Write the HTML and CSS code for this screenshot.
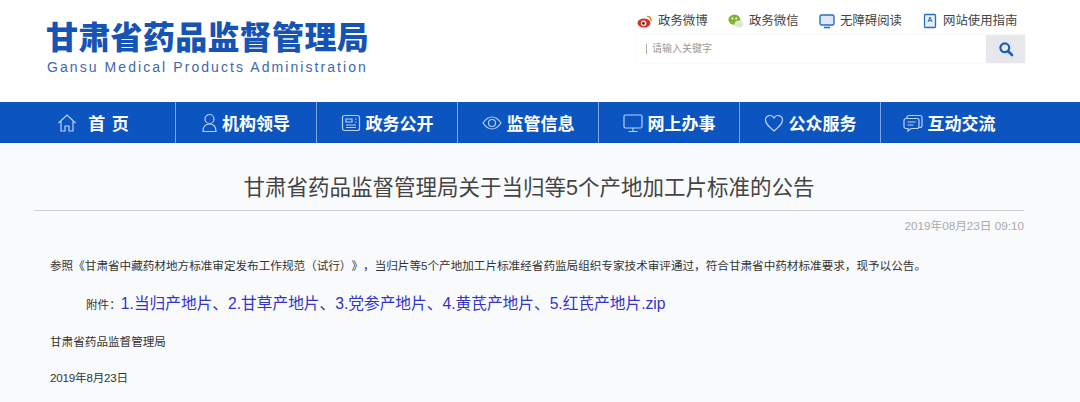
FILE: index.html
```html
<!DOCTYPE html>
<html lang="zh-CN">
<head>
<meta charset="utf-8">
<title>甘肃省药品监督管理局</title>
<link rel="stylesheet" href="styles.css">
</head>
<body>
<header class="header">
  <div class="logo">
    <div class="logo-cn">甘肃省药品监督管理局</div>
    <div class="logo-en">Gansu Medical Products Administration</div>
  </div>
  <div class="tools">
    <ul class="links">
      <li class="link link-weibo">
        <svg class="link-icon" viewBox="0 0 16 16"><ellipse cx="7" cy="10" rx="6.5" ry="4.6" fill="#d8332b"/><circle cx="6.6" cy="10.2" r="2.6" fill="#fff"/><circle cx="6.4" cy="10.4" r="1.3" fill="#222"/><path d="M10 3.5a3.6 3.6 0 0 1 4 4.5" fill="none" stroke="#ec8a2c" stroke-width="1.6"/></svg>
        政务微博</li>
      <li class="link link-wechat">
        <svg class="link-icon" viewBox="0 0 16 16"><ellipse cx="6.4" cy="6.6" rx="6" ry="5.2" fill="#7fb62e"/><circle cx="4.4" cy="5.4" r="1" fill="#fff"/><circle cx="8.2" cy="5.4" r="1" fill="#fff"/><ellipse cx="11" cy="11" rx="4.4" ry="3.6" fill="#dfe6d6"/></svg>
        政务微信</li>
      <li class="link link-access">
        <svg class="link-icon" viewBox="0 0 16 16"><rect x="1" y="2" width="14" height="10" rx="1.5" fill="#dce8f8" stroke="#2a6cc4" stroke-width="1.4"/><path d="M5 14.5h6" stroke="#2a6cc4" stroke-width="1.6"/></svg>
        无障碍阅读</li>
      <li class="link link-guide">
        <svg class="link-icon" viewBox="0 0 16 16"><rect x="2.5" y="1.5" width="11" height="13" rx="1" fill="#e6eefa" stroke="#2a6cc4" stroke-width="1.3"/><path d="M6 9l2-5 2 5M6.8 7.6h2.4" fill="none" stroke="#2a6cc4" stroke-width="1"/></svg>
        网站使用指南</li>
    </ul>
    <div class="search">
      <div class="search-input">请输入关键字</div>
      <div class="search-btn">
        <svg viewBox="0 0 16 16" width="16" height="16"><circle cx="6.8" cy="6.8" r="4.4" fill="none" stroke="#1d5fb8" stroke-width="2.2"/><path d="M10 10l4 4" stroke="#1d5fb8" stroke-width="2.6" stroke-linecap="round"/></svg>
      </div>
    </div>
  </div>
</header>
<nav class="nav">
  <div class="nav-inner">
    <a class="nav-item nav-home">
      <svg class="nav-icon" viewBox="0 0 20 20"><path d="M1.500 10 10 2l8.500 8M4 8.500V18h4v-5h4v5h4V8.500"/></svg>
      <span class="spaced">首 页</span></a>
    <a class="nav-item">
      <svg class="nav-icon nav-icon-narrow" viewBox="0 0 15 20"><circle cx="7.500" cy="6" r="4.500"/><path d="M1 18.500c0-5 2.500-7.500 6.500-7.500s6.500 2.500 6.500 7.500z"/></svg>
      机构领导</a>
    <a class="nav-item">
      <svg class="nav-icon" viewBox="0 0 20 20"><rect x="1.500" y="2.500" width="17" height="15" rx="2"/><path d="M5 6h6v3H5zM5 12h10M5 14.500h10M14 6h1.500M14 9h1.500"/></svg>
      政务公开</a>
    <a class="nav-item">
      <svg class="nav-icon" viewBox="0 0 20 20"><path d="M1 10c3-4.500 6-6 9-6s6 1.500 9 6c-3 4.500-6 6-9 6s-6-1.500-9-6z"/><circle cx="10" cy="10" r="3.500"/></svg>
      监管信息</a>
    <a class="nav-item">
      <svg class="nav-icon" viewBox="0 0 20 20"><rect x="1" y="2" width="18" height="13" rx="1.500"/><path d="M10 15v3.500M5.500 18.500h9"/></svg>
      网上办事</a>
    <a class="nav-item">
      <svg class="nav-icon" viewBox="0 0 20 20"><path d="M10 18C4 13 1.500 10.500 1.500 7A4.500 4.500 0 0 1 10 5a4.500 4.500 0 0 1 8.500 2c0 3.500-2.500 6-8.500 11z"/></svg>
      公众服务</a>
    <a class="nav-item nav-last">
      <svg class="nav-icon" viewBox="0 0 20 20"><path d="M4 5.500V4.500a2 2 0 0 1 2-2h11a2 2 0 0 1 2 2v8a2 2 0 0 1-2 2h-1"/><path d="M3 5.500h11a2 2 0 0 1 2 2v6a2 2 0 0 1-2 2H8l-3 2.500v-2.500H3a2 2 0 0 1-2-2v-6a2 2 0 0 1 2-2zM4.500 9h8M4.500 12h6"/></svg>
      互动交流</a>
  </div>
</nav>
<main class="article">
  <h1 class="title">甘肃省药品监督管理局关于当归等5个产地加工片标准的公告</h1>
  <div class="date">2019年08月23日 09:10</div>
  <p class="para para-intro">参照《甘肃省中藏药材地方标准审定发布工作规范（试行）》，当归片等5个产地加工片标准经省药监局组织专家技术审评通过，符合甘肃省中药材标准要求，现予以公告。</p>
  <p class="para para-attach">附件：<a class="attach-link">1.当归产地片、2.甘草产地片、3.党参产地片、4.黄芪产地片、5.红芪产地片.zip</a></p>
  <p class="para para-org">甘肃省药品监督管理局</p>
  <p class="para para-day">2019年8月23日</p>
</main>
</body>
</html>
```
FILE: styles.css
```css
* { box-sizing: border-box; }
html, body { margin: 0; padding: 0; }
body {
  width: 1080px;
  height: 402px;
  overflow: hidden;
  background: #f8fafc;
  font-family: "Liberation Sans", "Noto Sans CJK SC", sans-serif;
  color: #333;
  text-spacing-trim: space-all;
}
.header {
  height: 102px;
  background: #fff;
  display: flex;
  justify-content: space-between;
  padding: 0 55px 0 47px;
}
.logo { padding-top: 21px; }
.logo-cn {
  margin-left: -1px;
  font-size: 32px;
  line-height: 34px;
  font-weight: 900;
  color: #1553b4;
  letter-spacing: 0.3px;
  white-space: nowrap;
}
.logo-en {
  margin-top: 4px;
  font-size: 14px;
  line-height: 16px;
  color: #3e68ad;
  letter-spacing: 2.07px;
  white-space: nowrap;
}
.tools { width: 388px; padding-top: 12px; }
.links {
  list-style: none;
  margin: 0;
  padding: 0;
  display: flex;
  height: 18px;
  font-size: 12.4px;
  line-height: 18px;
  color: #444;
}
.link { display: flex; align-items: center; gap: 5px; white-space: nowrap; }
.link-weibo { width: 91px; }
.link-wechat { width: 91px; }
.link-access { width: 103px; }
.link-icon { width: 16px; height: 16px; flex: none; }
.search {
  margin-top: 5px;
  height: 28px;
  display: flex;
  box-shadow: 0 0 2px #eceef2;
}
.search-input {
  flex: 1;
  padding-left: 15px;
  font-size: 10px;
  line-height: 28px;
  color: #999;
  background: #fff;
  position: relative;
}
.search-input::before {
  content: "";
  position: absolute;
  left: 9px;
  top: 9px;
  width: 1px;
  height: 10px;
  background: #aaa;
}
.search-btn {
  width: 39px;
  background: #e6e8ec;
  display: flex;
  align-items: center;
  justify-content: center;
}
.nav { height: 41px; background: #0c55c0; }
.nav-inner { display: flex; padding-left: 35px; }
.nav-item {
  width: 141px;
  height: 41px;
  flex: none;
  display: flex;
  align-items: center;
  justify-content: center;
  gap: 5px;
  color: #fff;
  font-size: 17px;
  font-weight: 700;
  white-space: nowrap;
  border-right: 1px solid #7fa8e6;
}
.nav-home { padding-right: 23px; }
.nav-last { border-right: 0; padding-right: 5px; }
.nav-icon {
  width: 20px;
  height: 20px;
  flex: none;
  fill: none;
  stroke: #b8d2f8;
  stroke-width: 1.200;
}
.nav-icon-narrow { width: 15px; }
.spaced { margin-left: 6px; letter-spacing: 1px; }
.article { padding: 0 56px 0 34px; }
.title {
  margin: 0;
  height: 68px;
  padding-top: 30px;
  font-size: 21.5px;
  line-height: 30px;
  font-weight: 400;
  text-align: center;
  color: #444;
  border-bottom: 1px solid #cfcfcf;
}
.date {
  margin-top: 7px;
  font-size: 11.7px;
  line-height: 16px;
  color: #aaa;
  text-align: right;
}
.para {
  margin: 0;
  padding-left: 16px;
  font-size: 11.6px;
  line-height: 16px;
  color: #333;
  white-space: nowrap;
}
.para-intro { margin-top: 24px; }
.para-attach { margin-top: 19px; padding-left: 52px; line-height: 22px; }
.attach-link { font-size: 15.7px; color: #3333cc; }
.para-org { margin-top: 18px; }
.para-day { margin-top: 20px; letter-spacing: -0.2px; }
```
